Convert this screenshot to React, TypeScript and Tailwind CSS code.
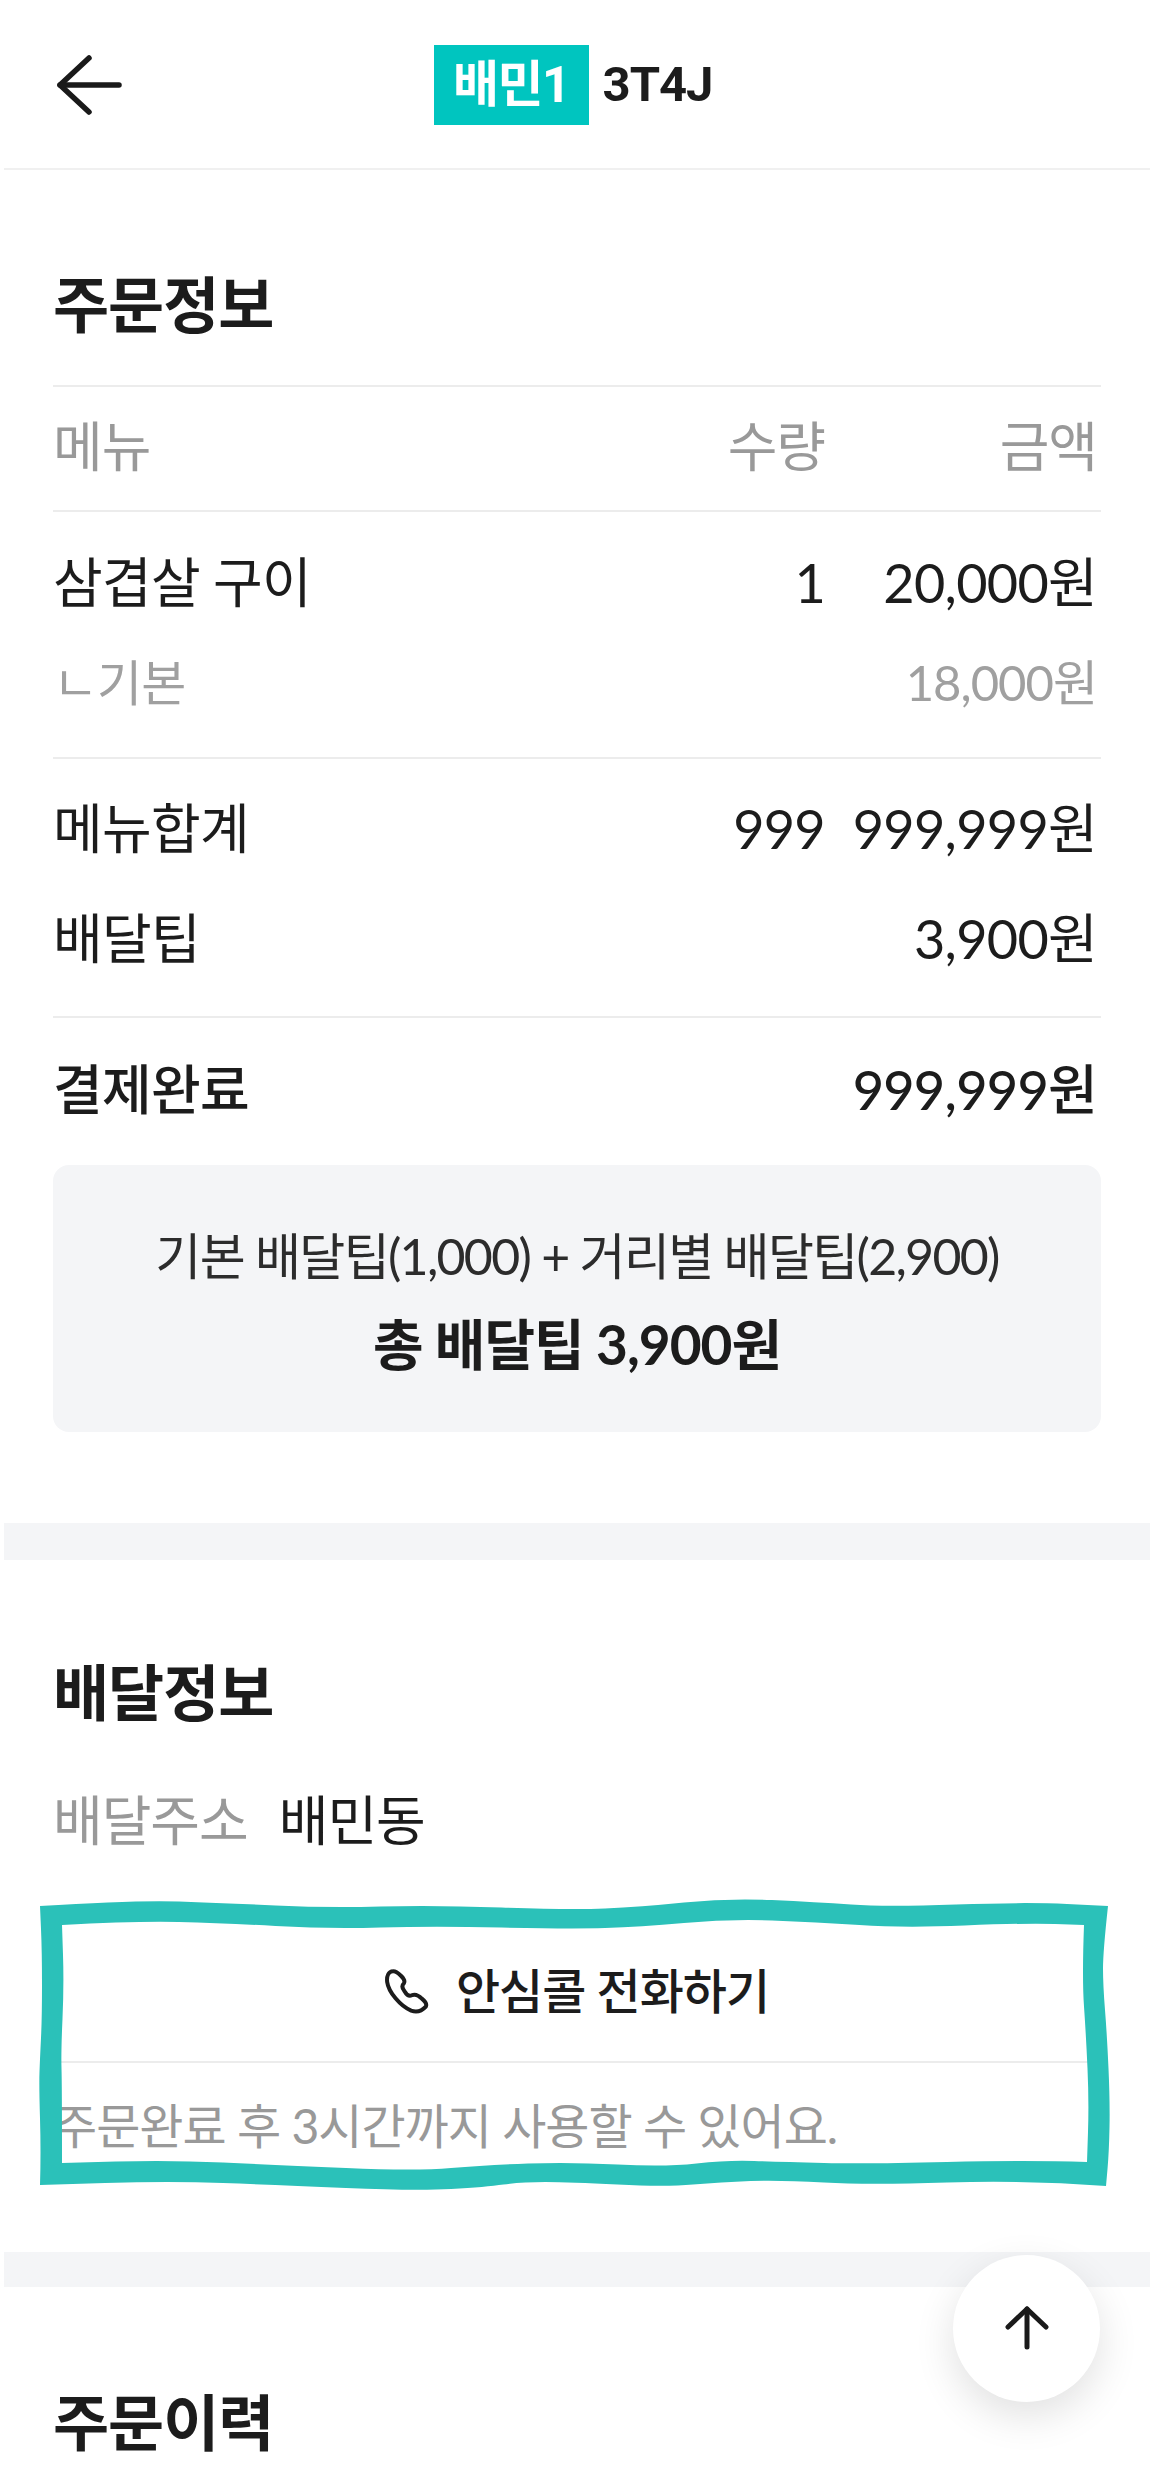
const font = 'font-["Lato","Noto_Sans_CJK_KR",sans-serif]';

type Pt = [number, number];

// hand-traced edges of the marker outline, corner to corner
const outer: Pt[][] = [
  [[40, 1906], [135, 1900], [223, 1903], [328, 1908], [433, 1905], [570, 1910], [640, 1907], [728, 1898], [816, 1902], [886, 1907], [1026, 1902], [1108, 1906]],
  [[1108, 1906], [1103, 1952], [1103, 1985], [1107, 2035], [1110, 2102], [1109, 2152], [1106, 2186]],
  [[1106, 2186], [1026, 2180], [868, 2185], [780, 2180], [721, 2182], [665, 2187], [570, 2182], [521, 2182], [486, 2187], [416, 2191], [276, 2185], [170, 2181], [40, 2185]],
  [[40, 2185], [41, 2152], [39, 2085], [40, 2058], [42, 2018], [42, 1952], [40, 1906]],
];
const inner: Pt[][] = [
  [[62, 1925], [135, 1921], [223, 1923], [328, 1929], [433, 1926], [570, 1929], [640, 1927], [728, 1919], [816, 1922], [903, 1928], [1026, 1923], [1084, 1925]],
  [[1084, 1925], [1082, 1978], [1086, 2035], [1089, 2102], [1087, 2162]],
  [[1087, 2162], [1026, 2160], [868, 2164], [780, 2162], [728, 2160], [665, 2167], [570, 2162], [486, 2165], [416, 2171], [276, 2165], [170, 2160], [62, 2163]],
  [[62, 2163], [62, 2085], [61, 2052], [64, 1985], [62, 1925]],
];

function edgePath(edges: Pt[][]) {
  let d = `M${edges[0][0][0]} ${edges[0][0][1]}`;
  for (const pts of edges) {
    for (let i = 1; i < pts.length - 1; i++) {
      const mx = (pts[i][0] + pts[i + 1][0]) / 2;
      const my = (pts[i][1] + pts[i + 1][1]) / 2;
      d += ` Q${pts[i][0]} ${pts[i][1]} ${mx} ${my}`;
    }
    const last = pts[pts.length - 1];
    d += ` L${last[0]} ${last[1]}`;
  }
  return d + ' Z';
}

function Row({ name, qty, amount, className = '' }: { name: string; qty?: string; amount: string; className?: string }) {
  return (
    <div className={`grid grid-cols-[1fr_auto_272px] pr-[4px] h-[70px] leading-[70px] items-center tracking-[-0.7px] ${className}`}>
      <span>{name}</span>
      <span>{qty}</span>
      <span className="text-right">{amount}</span>
    </div>
  );
}

export default function App() {
  return (
    <div className={`relative w-[1150px] h-[2475px] overflow-hidden bg-white text-[#1c1c1c] text-[54px] tracking-[-1px] ${font}`}>
      {/* Header */}
      <div className="ml-[4px] h-[170px] border-b-2 border-[#f0f0f0] relative flex justify-center">
        <svg className="absolute left-[52px] top-[52px]" width="66" height="66" viewBox="56 52 66 66" fill="none" stroke="#1a1a1a" strokeWidth="5.5" strokeLinecap="round" strokeLinejoin="round">
          <path d="M89 58 L60 85 L89 112" />
          <path d="M60 85 H119" />
        </svg>
        <div className="flex h-[80px] mt-[45px] mr-[8px]">
          <div className='w-[155px] bg-[#00c5bf] text-white flex items-center justify-center font-bold text-[50px] tracking-[-1.5px] font-["Roboto","Noto_Sans_CJK_KR",sans-serif]'>배민1</div>
          <div className='ml-[14px] flex items-center font-bold text-[49px] tracking-[-1px] font-["Roboto",sans-serif]'>3T4J</div>
        </div>
      </div>

      {/* 주문정보 */}
      <div className="ml-[4px] px-[49px] pt-[100px]">
        <h2 className="text-[61px] leading-[70px] font-bold mb-[45px] tracking-[-1px]">주문정보</h2>
        <div className="border-t-2 border-b-2 border-[#ececec] h-[127px] pb-[5px] grid grid-cols-[1fr_auto_272px] items-center pr-[4px] text-[#999]">
          <span>메뉴</span>
          <span>수량</span>
          <span className="text-right">금액</span>
        </div>
        <div className="border-b-2 border-[#ececec] pt-[36px] pb-[39px] flex flex-col gap-[30px]">
          <Row name="삼겹살 구이" qty="1" amount="20,000원" />
          <div className="flex justify-between h-[70px] items-center pr-[4px] text-[#a0a0a0] text-[49px]">
            <span>ㄴ기본</span>
            <span>18,000원</span>
          </div>
        </div>
        <div className="border-b-2 border-[#ececec] pt-[35px] pb-[42px] flex flex-col gap-[40px]">
          <Row name="메뉴합계" qty="999" amount="999,999원" />
          <Row name="배달팁" amount="3,900원" />
        </div>
        <div className="pt-[37px]">
          <Row name="결제완료" amount="999,999원" className="font-medium" />
        </div>
        <div className="mt-[40px] h-[267px] rounded-[16px] bg-[#f4f5f7] flex flex-col items-center pt-[59px] gap-[21px]">
          <div className="text-[50px] leading-[64px] text-[#2c2c2c] tracking-[-1.7px]">기본 배달팁(1,000) + 거리별 배달팁(2,900)</div>
          <div className="text-[55px] leading-[70px] font-bold">총 배달팁 3,900원</div>
        </div>
      </div>

      <div className="ml-[4px] mt-[91px] h-[37px] bg-[#f4f5f7]" />

      {/* 배달정보 */}
      <div className="ml-[4px] px-[49px] pt-[98px]">
        <h2 className="text-[61px] leading-[70px] font-bold tracking-[-1px]">배달정보</h2>
        <div className="mt-[59px] h-[70px] pb-[3px] flex items-center gap-[31px]">
          <span className="text-[#999]">배달주소</span>
          <span>배민동</span>
        </div>
        <div className="relative mt-[64px]">
          <div className="h-[142px] border-b-2 border-[#ececec] flex items-center justify-center gap-[24px] text-[48px] font-medium">
            <svg width="47" height="50" viewBox="40 30 140 150" fill="none" stroke="#1c1c1c" strokeWidth="12" strokeLinejoin="round">
              <path d="M62 46 C50 48 44 60 46 78 C50 108 85 150 118 164 C135 170 150 165 162 152 C166 144 160 136 150 128 C140 118 128 114 120 118 C112 122 105 118 98 106 C90 96 90 88 96 82 C100 76 96 68 88 60 C78 50 70 44 62 46 Z" />
            </svg>
            <span>안심콜 전화하기</span>
          </div>
          <div className="h-[106px] pt-[33px] text-[#999] text-[48px] leading-[60px]">주문완료 후 3시간까지 사용할 수 있어요.</div>
          <svg className="absolute -left-[53px] -top-[31px] w-[1150px] h-[310px]" viewBox="0 1890 1150 310">
            <path d={edgePath(outer) + ' ' + edgePath(inner)} fill="#2bc1b9" fillRule="evenodd" />
          </svg>
        </div>
      </div>

      <div className="ml-[4px] mt-[83px] h-[35px] bg-[#f4f5f7]" />

      {/* 주문이력 */}
      <div className="ml-[4px] px-[49px] pt-[101px]">
        <h2 className="text-[61px] leading-[70px] font-bold tracking-[-1px]">주문이력</h2>
      </div>

      {/* scroll top */}
      <div className="absolute right-[50px] bottom-[73px] w-[147px] h-[147px] rounded-full bg-white shadow-[0_14px_40px_rgba(0,0,0,0.12)] flex items-center justify-center">
        <svg width="48" height="48" viewBox="0 0 48 48" fill="none" stroke="#1a1a1a" strokeWidth="5" strokeLinecap="round" strokeLinejoin="round">
          <path d="M5 22 L24 4 L43 22" />
          <path d="M24 4 V42" />
        </svg>
      </div>
    </div>
  );
}
